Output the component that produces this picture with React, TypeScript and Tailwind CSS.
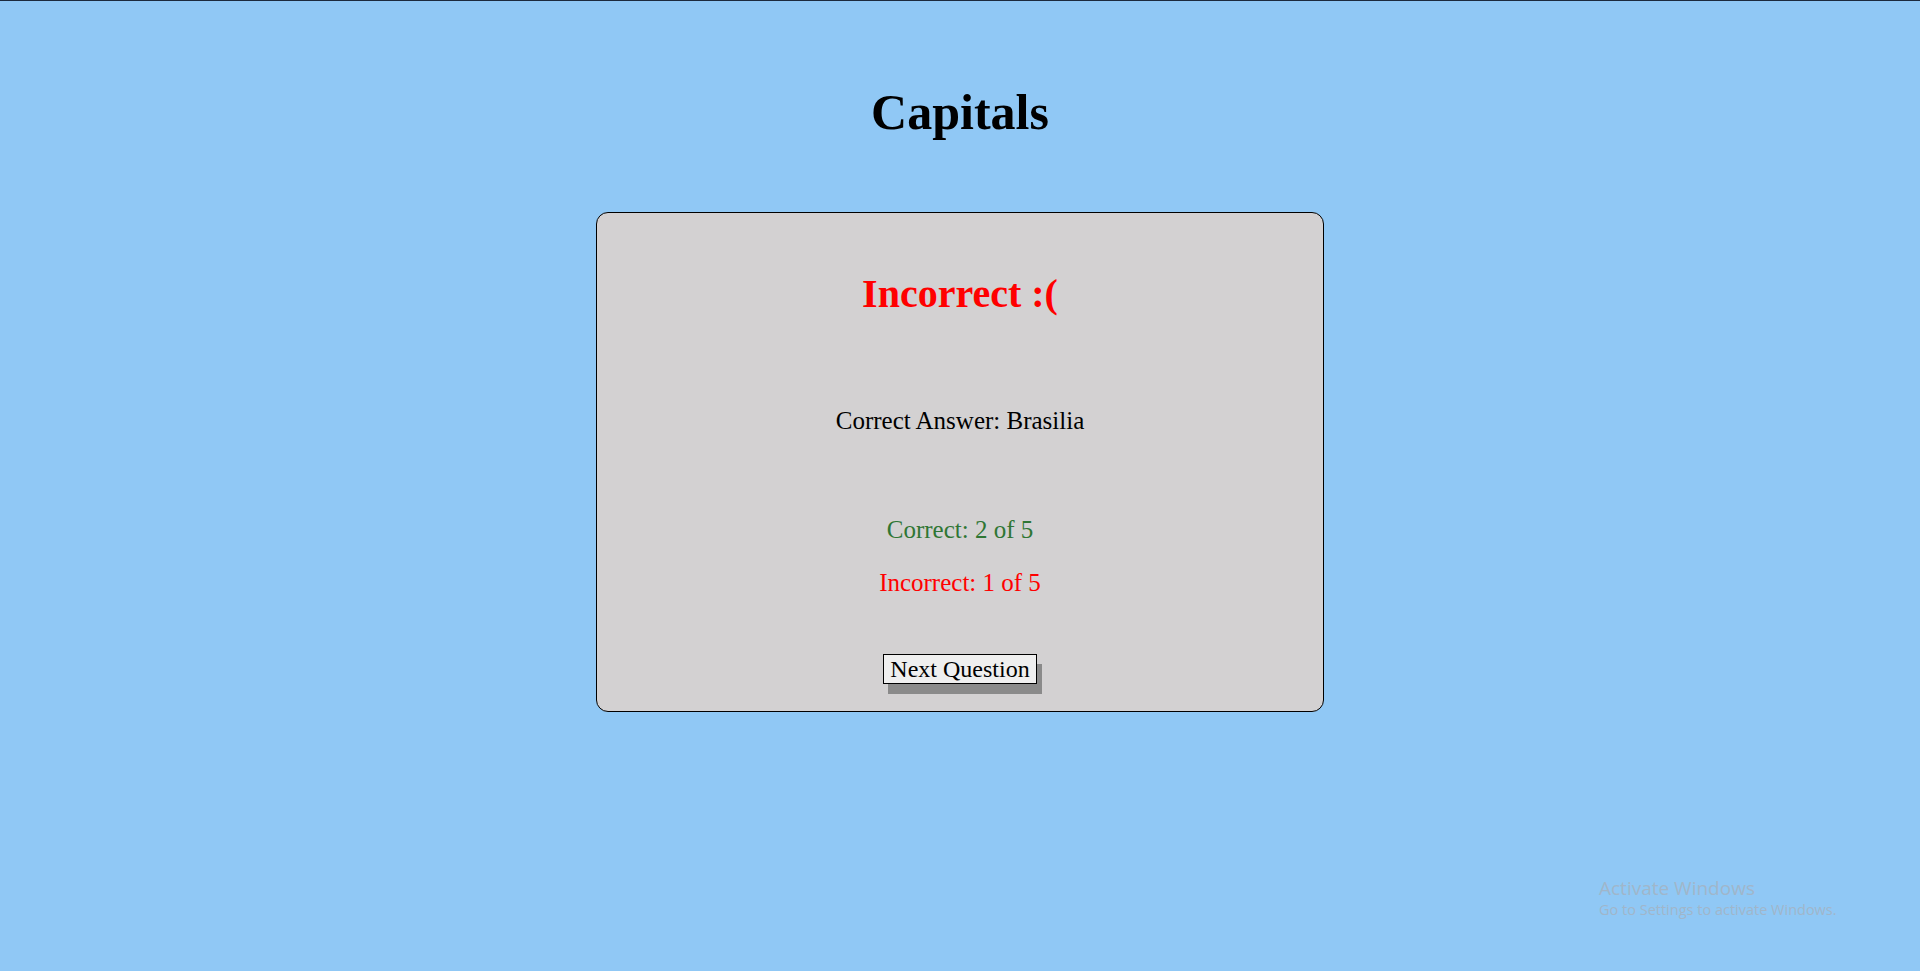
import React from 'react';

const serif = { fontFamily: '"Liberation Serif", "Times New Roman", serif' };

const ResultCard: React.FC = () => {
  return (
    <div className="w-[728px] h-[500px] mx-auto mt-[75px] bg-[#d3d1d2] border border-black rounded-[12px] flex flex-col items-center">
      <h2 className="mt-[61px] text-[40px] leading-none font-bold text-[#ff0000]">Incorrect :(</h2>
      <p className="mt-[94px] text-[25px] leading-none text-black">Correct Answer: Brasilia</p>
      <p className="mt-[84px] text-[25px] leading-none text-[#2f7634]">Correct: 2 of 5</p>
      <p className="mt-[28px] text-[25px] leading-none text-[#ff0000]">Incorrect: 1 of 5</p>
      <button
        className="mt-[59px] px-[6px] py-[2px] text-[24px] leading-none text-black bg-[#efefef] border border-black shadow-[5px_10px_0_#8a8a8a]"
        style={serif}
      >
        Next Question
      </button>
    </div>
  );
};

export default function App() {
  return (
    <div className="relative w-full min-h-[971px] bg-[#90c8f5] border-t border-[#1c2a3d] overflow-hidden" style={serif}>
      <h1 className="pt-[86px] text-center text-[50px] leading-none font-bold text-black">Capitals</h1>
      <ResultCard />
      <div className="absolute left-[1599px] top-[875px] text-[#a0b6ca]" style={{ fontFamily: '"Open Sans", "Noto Sans", sans-serif' }}>
        <div className="text-[19px] leading-[25px]">Activate Windows</div>
        <div className="text-[14.5px] leading-[18px]">Go to Settings to activate Windows.</div>
      </div>
    </div>
  );
}
